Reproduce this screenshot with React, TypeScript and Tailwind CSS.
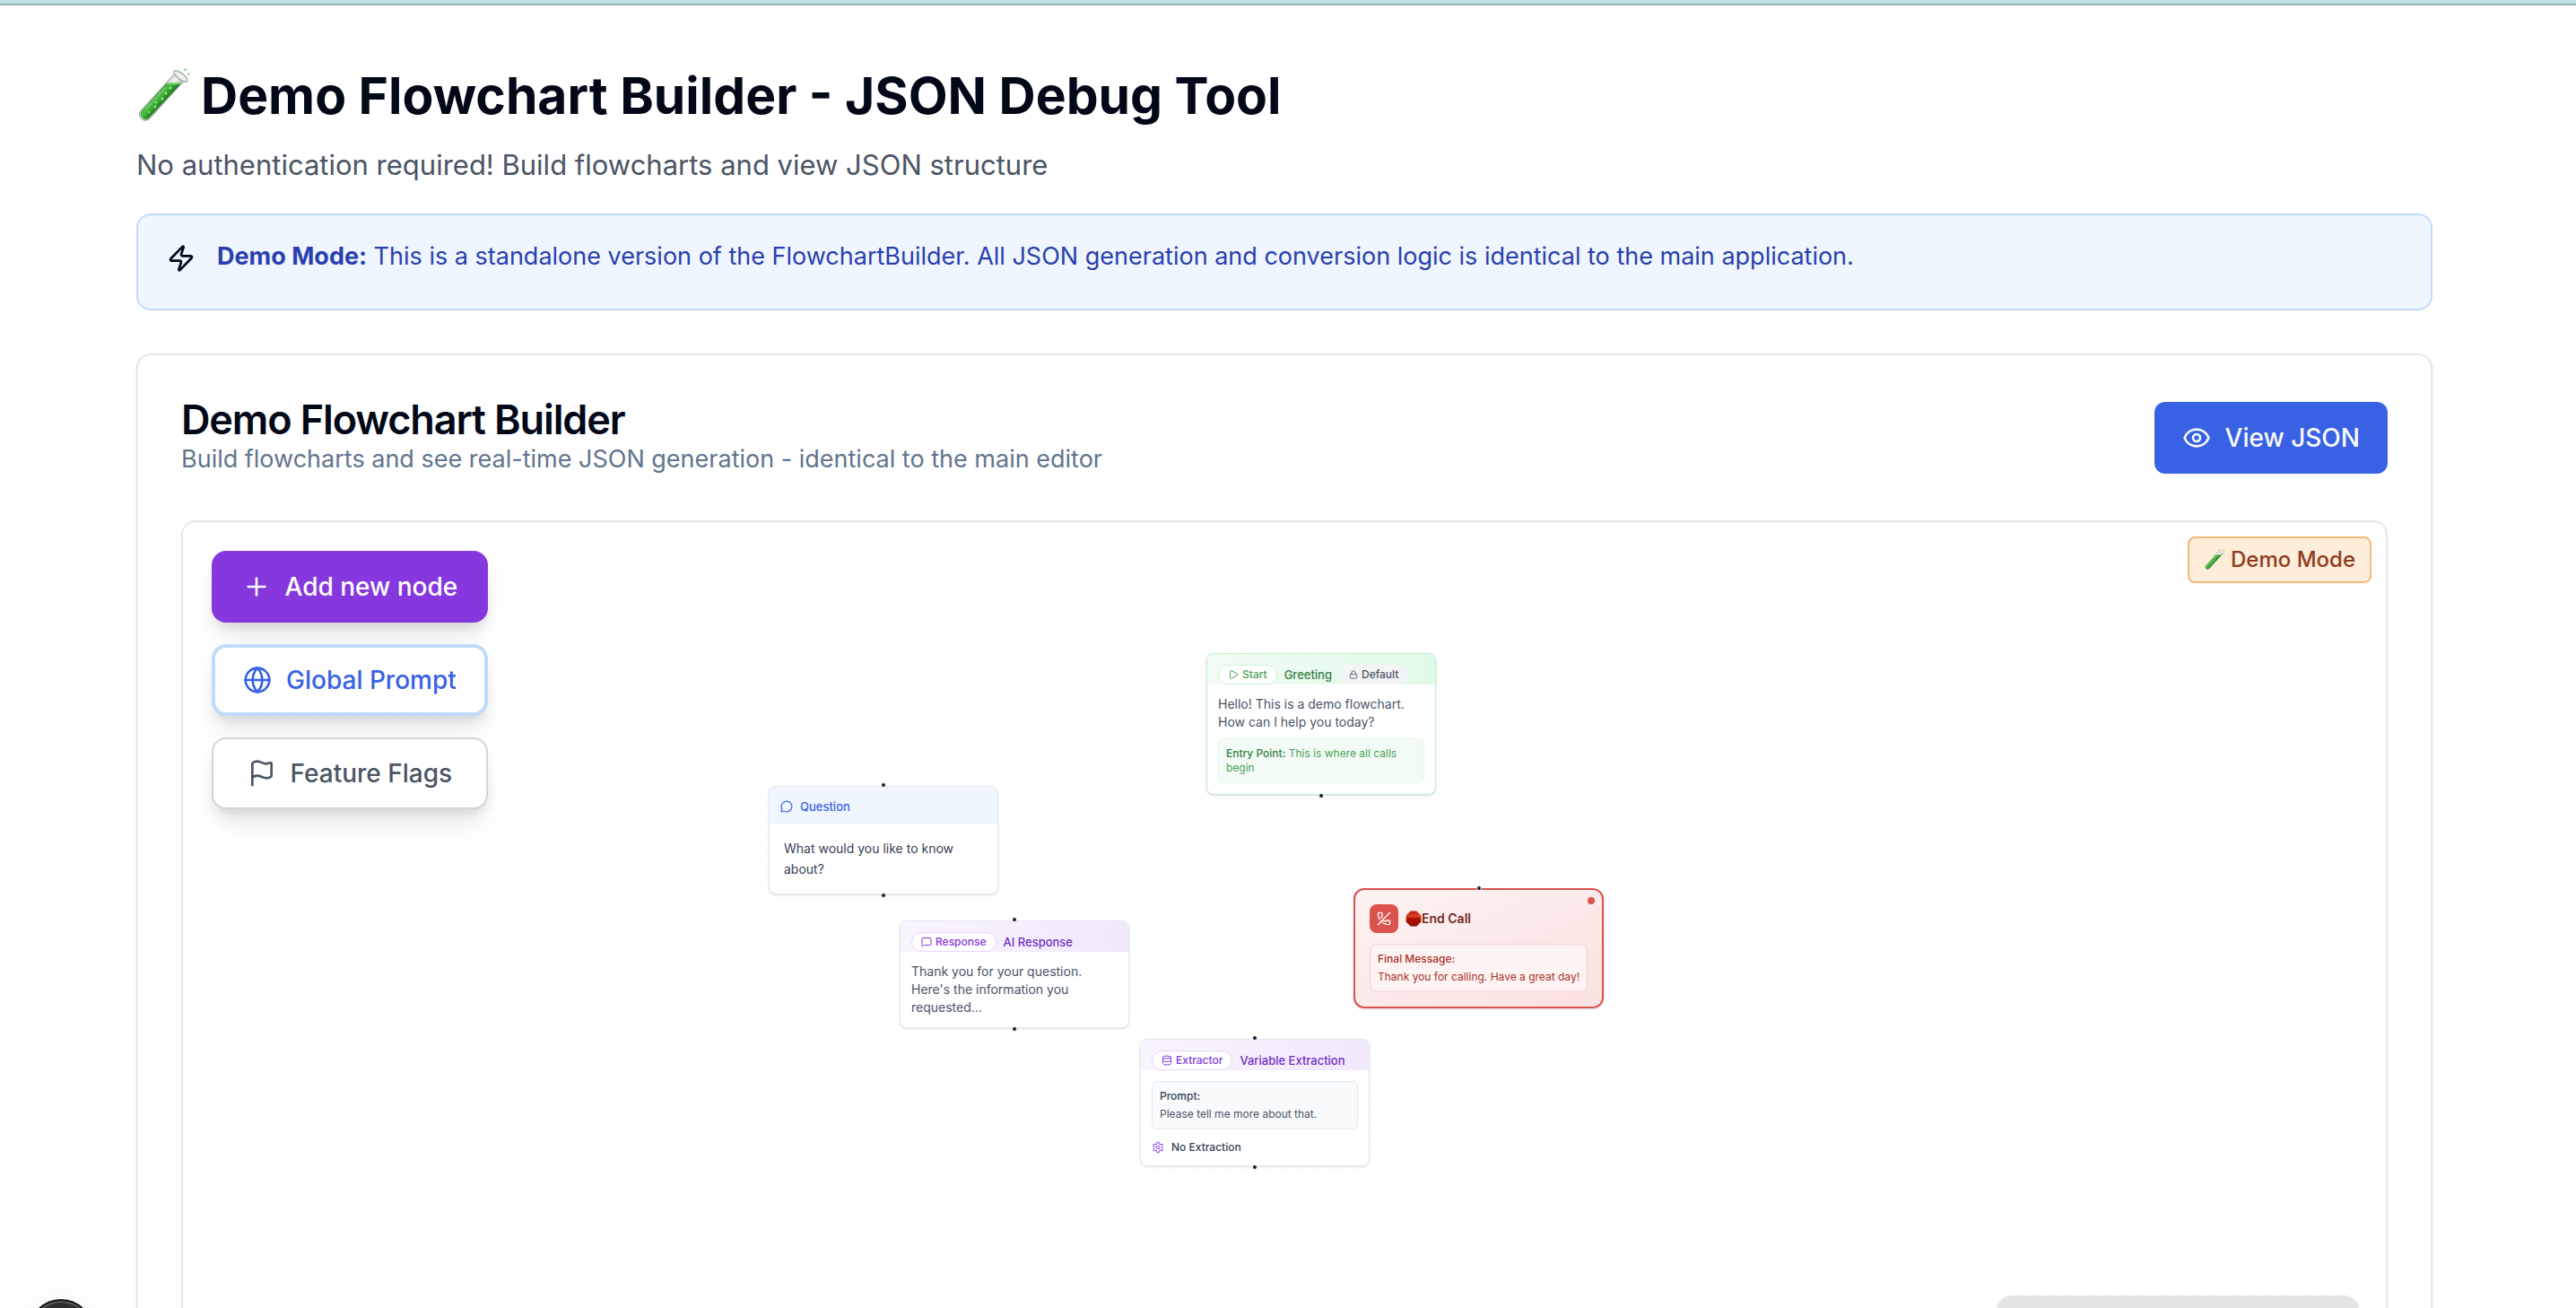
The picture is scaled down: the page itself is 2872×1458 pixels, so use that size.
import type { ReactNode } from "react";
import {
  Database,
  Eye,
  Flag,
  Globe,
  Lock,
  MessageCircle,
  MessageSquare,
  PhoneOff,
  Play,
  Plus,
  Settings,
  Zap,
} from "lucide-react";

function TestTube({ className }: { className: string }) {
  return (
    <svg viewBox="4 8 60 64" className={className} aria-hidden="true">
      <defs>
        <linearGradient id="tube-liquid" gradientUnits="userSpaceOnUse" x1="25" y1="36" x2="36" y2="46">
          <stop offset="0" stopColor="#2f8a2c" />
          <stop offset="0.4" stopColor="#4fbf47" />
          <stop offset="0.75" stopColor="#2f9a2b" />
          <stop offset="1" stopColor="#1c6e1a" />
        </linearGradient>
        <linearGradient id="tube-glass" gradientUnits="userSpaceOnUse" x1="25" y1="36" x2="36" y2="46">
          <stop offset="0" stopColor="#c5c9c5" />
          <stop offset="0.5" stopColor="#f8f9f8" />
          <stop offset="1" stopColor="#b4b9b4" />
        </linearGradient>
      </defs>
      <path
        d="M48.200 13.600 9.200 56.300A6.500 6.500 0 0 0 18.800 65.100L57.800 22.400z"
        fill="url(#tube-glass)"
        stroke="#8b938b"
        strokeWidth="1"
      />
      <path d="M37.500 26 9.900 56.800A5.600 5.600 0 0 0 18.200 64.300L53.800 26z" fill="url(#tube-liquid)" />
      <ellipse cx="45.600" cy="26" rx="8.200" ry="1.300" fill="#7ad673" />
      <path d="M36 31 14 55" stroke="#8be083" strokeWidth="1.600" strokeLinecap="round" opacity="0.6" />
      <g fill="#b4f0ac">
        <circle cx="42" cy="31" r="1.200" />
        <circle cx="37" cy="37" r="1.200" />
        <circle cx="33" cy="43" r="1.300" />
        <circle cx="26" cy="47" r="1.100" />
        <circle cx="25" cy="52" r="1.200" />
        <circle cx="18" cy="58" r="1" />
      </g>
      <ellipse
        cx="53.500"
        cy="18"
        rx="9.300"
        ry="3.400"
        transform="rotate(38 53.500 18)"
        fill="#eef0ee"
        stroke="#9da39d"
        strokeWidth="1.200"
      />
      <circle cx="58.500" cy="10.800" r="1.700" fill="#9ee096" />
      <circle cx="62" cy="15.500" r="1.400" fill="#9ee096" />
    </svg>
  );
}

function StopSign({ className }: { className: string }) {
  return (
    <svg viewBox="0 0 18 18" className={className} aria-hidden="true">
      <defs>
        <linearGradient id="stop-red" x1="0" y1="0" x2="0" y2="1">
          <stop offset="0" stopColor="#c21d08" />
          <stop offset="0.35" stopColor="#d8452c" />
          <stop offset="0.5" stopColor="#b01000" />
          <stop offset="1" stopColor="#8f0d00" />
        </linearGradient>
      </defs>
      <path d="M5.600 0.600h6.800l5 5v6.800l-5 5H5.600l-5-5V5.600z" fill="url(#stop-red)" />
    </svg>
  );
}

function Handle({ side }: { side: "top" | "bottom" }) {
  const place = side === "top" ? "-top-[5px]" : "-bottom-[5px]";
  return (
    <span
      className={`absolute left-1/2 size-1.5 -translate-x-1/2 rounded-full border border-white bg-[#1a192b] ${place}`}
    />
  );
}

function Pill({ icon, tone, children }: { icon: ReactNode; tone: string; children: ReactNode }) {
  return (
    <span
      className={`flex items-center gap-1 rounded-full border px-2.5 py-0.5 text-xs font-medium ${tone}`}
    >
      {icon}
      {children}
    </span>
  );
}

const cardBase = "absolute w-64 rounded-lg border bg-white shadow-sm";
const nodeTitle = "text-[13px] leading-5 font-medium";
const toolButton = "flex h-20 items-center justify-center gap-4 rounded-2xl px-[31px] text-[28px] font-medium";
const toolShadow = "shadow-[0_20px_30px_-6px_rgba(0,0,0,0.1),0_8px_12px_-4px_rgba(0,0,0,0.1)]";

function GreetingNode() {
  return (
    <article className={`${cardBase} left-[1141px] top-[146px] border-[#bdf0cb]`}>
      <header className="flex items-center gap-2 rounded-t-lg bg-linear-to-r from-[#f2fcf5] to-[#e0fae8] px-3 pt-3">
        <Pill tone="border-[#cdf3d8] bg-white text-[#4ba055]" icon={<Play className="size-3" />}>
          Start
        </Pill>
        <h3 className={`${nodeTitle} text-[#397c43]`}>Greeting</h3>
        <Pill tone="border-transparent bg-gray-100 text-gray-600" icon={<Lock className="size-2.5" />}>
          Default
        </Pill>
      </header>
      <div className="p-3">
        <p className="text-sm text-gray-600">Hello! This is a demo flowchart. How can I help you today?</p>
        <p className="mt-2 rounded-md border border-[#e0fae8] bg-[#f2fcf5] p-2 text-xs text-[#4ba055]">
          <strong className="font-medium text-[#397c43]">Entry Point:</strong> This is where all calls begin
        </p>
      </div>
      <Handle side="bottom" />
    </article>
  );
}

function QuestionNode() {
  return (
    <article className={`${cardBase} left-[653px] top-[294px] border-slate-200`}>
      <Handle side="top" />
      <header className="flex items-center gap-2 rounded-t-lg border-b border-[#e6effc] bg-[#eff6ff] px-3 pt-3 pb-2">
        <MessageCircle className="size-3.5 text-[#3862e3]" />
        <h3 className={`${nodeTitle} text-[#3862e3]`}>Question</h3>
      </header>
      <p className="p-4 text-sm leading-[23px] text-gray-700">What would you like to know about?</p>
      <Handle side="bottom" />
    </article>
  );
}

function ResponseNode() {
  return (
    <article className={`${cardBase} left-[799px] top-[444px] border-slate-200`}>
      <Handle side="top" />
      <header className="flex items-center gap-2 rounded-t-lg bg-linear-to-r from-[#f9f5fe] to-[#f1e8fd] px-3 pt-3">
        <Pill tone="border-[#e6d6fb] bg-white text-[#8638de]" icon={<MessageSquare className="size-3" />}>
          Response
        </Pill>
        <h3 className={`${nodeTitle} text-[#7030c4]`}>AI Response</h3>
      </header>
      <p className="p-3 text-sm text-gray-600">
        Thank you for your question. Here's the information you requested...
      </p>
      <Handle side="bottom" />
    </article>
  );
}

function ExtractorNode() {
  return (
    <article className={`${cardBase} left-[1067px] top-[576px] border-slate-200`}>
      <Handle side="top" />
      <header className="flex items-center gap-2 rounded-t-lg bg-linear-to-r from-[#f9f5fe] to-[#f1e8fd] px-3 pt-3">
        <Pill tone="border-[#e6d6fb] bg-white text-[#8638de]" icon={<Database className="size-3" />}>
          Extractor
        </Pill>
        <h3 className={`${nodeTitle} text-[#7030c4]`}>Variable Extraction</h3>
      </header>
      <div className="flex flex-col gap-3 p-3">
        <div className="flex flex-col gap-1 rounded-md border border-slate-200 bg-slate-50 p-2 text-xs">
          <p className="font-medium text-gray-700">Prompt:</p>
          <p className="text-gray-600">Please tell me more about that.</p>
        </div>
        <div className="flex items-center gap-2 text-xs font-medium text-gray-700">
          <Settings className="size-3.5 text-[#9d5cf0]" />
          No Extraction
        </div>
      </div>
      <Handle side="bottom" />
    </article>
  );
}

function EndCallNode() {
  return (
    <article className="absolute left-[1305px] top-[408px] rounded-xl border-2 border-[#dc524e] bg-linear-to-br from-[#fdf3f2] to-[#f9e2e1] p-4 shadow-sm">
      <Handle side="top" />
      <span className="absolute right-2 top-2 size-2 rounded-full bg-[#dc524e]" />
      <header className="flex items-center gap-2">
        <span className="flex size-8 items-center justify-center rounded-lg bg-[#dc524e] text-white">
          <PhoneOff className="size-4" />
        </span>
        <h3 className="flex items-center text-sm font-semibold text-[#75261f]">
          <StopSign className="size-[18px]" />
          End Call
        </h3>
      </header>
      <div className="mt-3 flex flex-col gap-1 rounded-lg border border-[#f6cfce] bg-[#fdf3f2] p-2 text-xs text-[#a9322b]">
        <p className="font-medium">Final Message:</p>
        <p>Thank you for calling. Have a great day!</p>
      </div>
    </article>
  );
}

function DotGrid() {
  return (
    <svg className="absolute inset-0 size-full" aria-hidden="true">
      <defs>
        <pattern id="grid-dots" x="5" y="0" width="20" height="20" patternUnits="userSpaceOnUse">
          <rect width="1" height="1" fill="#e0e1e4" />
        </pattern>
      </defs>
      <rect width="100%" height="100%" fill="url(#grid-dots)" />
    </svg>
  );
}

export default function App() {
  return (
    <div className="relative h-screen overflow-hidden bg-white font-['Inter',sans-serif] text-[#020817]">
      <div className="h-1.5 border-b-2 border-[#97adb8] bg-[#bfe0e2]" />
      <div className="pr-2">
        <main className="mx-auto max-w-[2560px] pt-16">
          <h1 className="flex items-center gap-3 text-[57px] leading-[74px] font-bold">
            <TestTube className="h-16 w-[60px]" />
            Demo Flowchart Builder - JSON Debug Tool
          </h1>
          <p className="mt-4 text-[31px] leading-[48px] text-gray-600">
            No authentication required! Build flowcharts and view JSON structure
          </p>

          <div
            role="alert"
            className="mt-[30px] flex items-start gap-6 rounded-2xl border-2 border-[#c1dafc] bg-[#eff6ff] px-8 pt-[26px] pb-[38px]"
          >
            <Zap className="mt-1.5 size-8" />
            <p className="text-[27px] leading-10 text-[#2a3fae]">
              <strong className="font-bold">Demo Mode:</strong> This is a standalone version of the FlowchartBuilder. All
              JSON generation and conversion logic is identical to the main application.
            </p>
          </div>

          <section className="mt-12 rounded-2xl border-2 border-slate-200 bg-white p-12 shadow-sm">
            <header className="flex items-center justify-between">
              <div>
                <h2 className="text-[45px] leading-[48px] font-semibold tracking-tight">Demo Flowchart Builder</h2>
                <p className="text-[27px] leading-10 text-slate-500">
                  Build flowcharts and see real-time JSON generation - identical to the main editor
                </p>
              </div>
              <button
                type="button"
                className="flex h-20 items-center gap-4 rounded-xl bg-[#3862e3] px-[31px] text-[28px] font-medium text-slate-50"
              >
                <Eye className="size-8" />
                View JSON
              </button>
            </header>

            <div className="relative mt-12 h-[1200px] overflow-hidden rounded-2xl border-2 border-gray-200">
              <DotGrid />
              <GreetingNode />
              <QuestionNode />
              <ResponseNode />
              <ExtractorNode />
              <EndCallNode />

              <div className="absolute left-8 top-8 flex flex-col gap-6">
                <button type="button" className={`${toolButton} ${toolShadow} bg-[#8638de] text-white`}>
                  <Plus className="size-8" />
                  Add new node
                </button>
                <button
                  type="button"
                  className={`${toolButton} ${toolShadow} border-4 border-[#c1dafc] bg-white text-[#3862e3]`}
                >
                  <Globe className="size-8" />
                  Global Prompt
                </button>
                <button
                  type="button"
                  className={`${toolButton} ${toolShadow} border-2 border-gray-300 bg-white text-gray-600`}
                >
                  <Flag className="size-8" />
                  Feature Flags
                </button>
              </div>

              <div className="absolute right-4 top-4 flex items-center gap-1.5 rounded-lg border-2 border-[#f5b97a] bg-[#fdedd9] px-4 py-2 text-2xl font-medium text-[#8f3b20]">
                <TestTube className="h-[26px] w-6" />
                Demo Mode
              </div>

              <div className="absolute right-[30px] bottom-[30px] h-[304px] w-[404px] rounded-2xl border-2 border-gray-200 bg-[#e4e4e4] shadow-md" />
            </div>
          </section>
        </main>
      </div>

      <button
        type="button"
        aria-label="Open dev tools"
        className="absolute -bottom-[62px] left-8 size-[72px] rounded-full border-2 border-[#171717] bg-[#2f2f2f] shadow-[inset_0_0_0_2px_#5a5a5a,0_0_32px_rgba(0,0,0,0.06)]"
      />
    </div>
  );
}
